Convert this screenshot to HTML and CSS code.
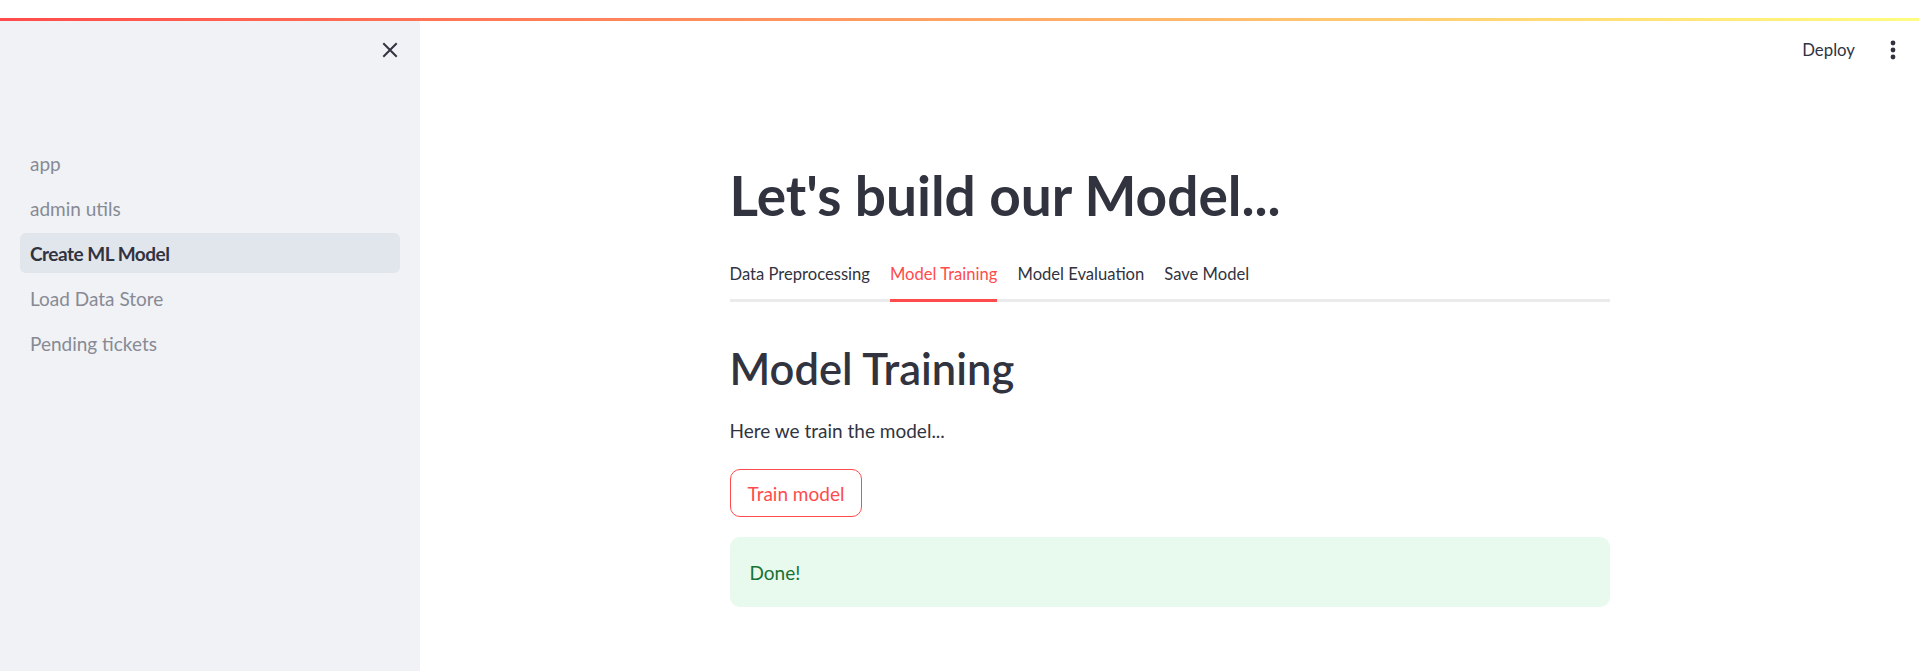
FILE: index.html
```html
<!DOCTYPE html>
<html lang="en">
<head>
<meta charset="utf-8">
<title>Create ML Model</title>
<link rel="stylesheet" href="styles.css">
</head>
<body>
<div class="topstrip"></div>
<div class="decoration"></div>
<div class="app">
  <aside class="sidebar">
    <div class="sidebar-header">
      <button class="close" aria-label="Close sidebar">
        <svg width="16" height="16" viewBox="0 0 16 16"><path d="M2 2 L14 14 M14 2 L2 14" stroke="#31333f" stroke-width="2" stroke-linecap="square" fill="none"/></svg>
      </button>
    </div>
    <nav class="nav">
      <a class="nav-item">app</a>
      <a class="nav-item">admin utils</a>
      <a class="nav-item active">Create ML Model</a>
      <a class="nav-item">Load Data Store</a>
      <a class="nav-item">Pending tickets</a>
    </nav>
  </aside>
  <main class="main">
    <header class="topbar">
      <span class="deploy">Deploy</span>
      <span class="kebab">
        <svg width="8" height="20" viewBox="0 0 8 20"><circle cx="4" cy="3" r="2.4" fill="#31333f"/><circle cx="4" cy="10" r="2.4" fill="#31333f"/><circle cx="4" cy="17" r="2.4" fill="#31333f"/></svg>
      </span>
    </header>
    <div class="block">
      <h1 class="title">Let's build our Model...</h1>
      <div class="tabs">
        <span class="tab">Data Preprocessing</span>
        <span class="tab active">Model Training</span>
        <span class="tab">Model Evaluation</span>
        <span class="tab">Save Model</span>
      </div>
      <h2 class="subtitle">Model Training</h2>
      <p class="text">Here we train the model...</p>
      <button class="btn">Train model</button>
      <div class="success">Done!</div>
    </div>
  </main>
</div>
</body>
</html>
```
FILE: styles.css
```css
* { box-sizing: border-box; }
html, body { margin: 0; padding: 0; }
body {
  font-family: Lato, "Liberation Sans", sans-serif;
  color: #31333f;
  background: #ffffff;
  height: 671px;
  overflow: hidden;
}
.topstrip { height: 18px; background: #ffffff; }
.decoration {
  height: 3px;
  background: linear-gradient(90deg, #ff4b4b 0%, #fffd80 100%);
}
.app { display: flex; height: 650px; }
.sidebar {
  width: 420px;
  flex: none;
  background: #f0f2f6;
  display: flex;
  flex-direction: column;
}
.sidebar-header {
  height: 58px;
  display: flex;
  align-items: center;
  justify-content: flex-end;
  padding-right: 22px;
}
.close {
  border: 0;
  background: transparent;
  padding: 0;
  width: 16px;
  height: 16px;
  display: flex;
}
.nav {
  display: flex;
  flex-direction: column;
  gap: 5px;
  padding: 64px 20px 0 20px;
}
.nav-item {
  height: 40px;
  display: flex;
  align-items: center;
  padding-left: 10px;
  border-radius: 6px;
  font-size: 19px;
  color: #878a94;
}
.nav-item.active {
  background: #e1e5ec;
  color: #31333f;
  font-weight: 700;
  letter-spacing: -0.5px;
}
.main {
  flex: 1;
  display: flex;
  flex-direction: column;
  min-width: 0;
}
.topbar {
  height: 57px;
  display: flex;
  align-items: center;
  justify-content: flex-end;
  padding-right: 22px;
  gap: 34px;
}
.deploy { font-size: 16.8px; color: #31333f; }
.kebab { display: flex; }
.block {
  width: 880px;
  margin: 0 auto;
  display: flex;
  flex-direction: column;
  align-items: flex-start;
}
.title {
  margin: 84px 0 0 0;
  font-size: 55px;
  line-height: 66px;
  font-weight: 700;
  color: #31333f;
}
.tabs {
  margin-top: 25px;
  width: 100%;
  display: flex;
  gap: 20px;
  border-bottom: 3px solid #ebebeb;
}
.tab {
  height: 49px;
  padding-bottom: 4px;
  display: flex;
  align-items: center;
  font-size: 16.6px;
  color: #31333f;
  border-bottom: 3px solid transparent;
  margin-bottom: -3px;
}
.tab.active { color: #ff4b4b; border-bottom-color: #ff4b4b; }
.subtitle {
  margin: 39px 0 0 0;
  font-size: 43.5px;
  line-height: 54px;
  font-weight: 600;
  color: #31333f;
}
.text {
  margin: 20px 0 0 0;
  font-size: 19px;
  line-height: 32px;
}
.btn {
  margin-top: 22px;
  height: 48px;
  padding: 0 17px;
  border: 1px solid #ff4b4b;
  border-radius: 10px;
  background: #ffffff;
  color: #ff4b4b;
  font-family: inherit;
  font-size: 19px;
}
.success {
  margin-top: 20px;
  width: 100%;
  height: 70px;
  display: flex;
  align-items: center;
  padding-left: 20px;
  border-radius: 10px;
  background: #e8f9ee;
  color: #177233;
  font-size: 19px;
}
```
